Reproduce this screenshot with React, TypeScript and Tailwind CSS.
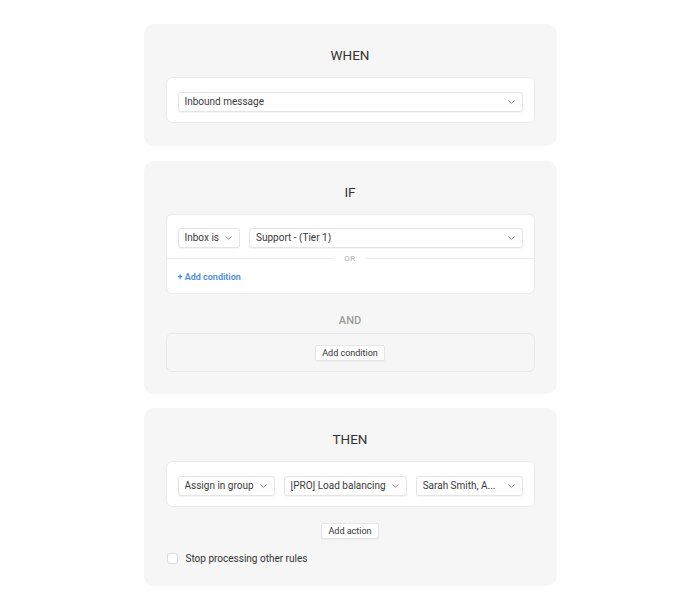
import React from "react"

function Chevron() {
  return (
    <svg width="7" height="4" viewBox="0 0 7 4" fill="none" className="shrink-0">
      <path d="M0.75 0.75l2.75 2.5 2.75-2.5" stroke="#8d8d8d" strokeWidth="1" strokeLinecap="round" strokeLinejoin="round" />
    </svg>
  )
}

function Select({ label, grow }: { label: string; grow?: boolean }) {
  return (
    <div
      className={`h-[20px] min-w-0 flex items-center justify-between gap-[6px] pl-[6px] pr-[7px] bg-white border border-[#e4e4e4] rounded-[3px] shadow-[0_1px_1px_rgba(0,0,0,0.04)] text-[10px] leading-none text-[#3a3a3a] ${
        grow ? "flex-1" : "shrink-0"
      }`}
    >
      <span className="whitespace-nowrap overflow-hidden">{label}</span>
      <Chevron />
    </div>
  )
}

function Button({ label }: { label: string }) {
  return (
    <button className="h-[16px] px-[6px] bg-white border border-[#e6e6e6] rounded-[2px] shadow-[0_1px_1px_rgba(0,0,0,0.04)] text-[9px] leading-none text-[#333]">
      {label}
    </button>
  )
}

function Panel({ title, className, children }: { title: string; className?: string; children: React.ReactNode }) {
  return (
    <div className={`bg-[#f6f6f6] rounded-[10px] px-[22px] pt-[23px] ${className ?? ""}`}>
      <h2 className="text-center text-[13.5px] leading-[16px] text-[#333] mb-[14px]">{title}</h2>
      {children}
    </div>
  )
}

export default function App() {
  return (
    <div className="min-h-screen bg-white pt-[24px]" style={{ fontFamily: "Roboto, 'Noto Sans', sans-serif" }}>
      <div className="w-[413px] mx-auto flex flex-col">
        {/* When */}
        <Panel title="WHEN" className="pb-[23px]">
          <div className="bg-white border border-[#ebebeb] rounded-[6px] px-[11px] pt-[14px] pb-[10px]">
            <Select label="Inbound message" grow />
          </div>
        </Panel>

        {/* If */}
        <Panel title="IF" className="pb-[22px] mt-[15px]">
          <div className="bg-white border border-[#ebebeb] rounded-[6px] mt-[1px]">
            <div className="flex gap-[9px] px-[11px] pt-[13px] pb-[10px]">
              <Select label="Inbox is" />
              <Select label="Support - (Tier 1)" grow />
            </div>
            <div className="flex items-center h-px">
              <div className="flex-1 h-px bg-[#ececec]" />
              <span className="px-[10px] text-[8px] leading-none tracking-[0.08em] text-[#aaa]">OR</span>
              <div className="flex-1 h-px bg-[#ececec]" />
            </div>
            <div className="px-[11px] pt-[11px] pb-[9px] text-[9px] leading-[14px] font-semibold text-[#4a8be0]">
              + Add condition
            </div>
          </div>
          <div className="text-center text-[11px] leading-[16px] font-medium text-[#9c9c9c] mt-[19px] mb-[4px]">AND</div>
          <div className="border border-[#e8e8e8] rounded-[6px] flex justify-center pt-[11px] pb-[10px]">
            <Button label="Add condition" />
          </div>
        </Panel>

        {/* Then */}
        <Panel title="THEN" className="pb-[22px] mt-[14px]">
          <div className="bg-white border border-[#ebebeb] rounded-[6px] px-[11px] pt-[14px] pb-[10px] mt-[1px] flex gap-[9px]">
            <Select label="Assign in group" />
            <Select label="[PRO] Load balancing" />
            <Select label="Sarah Smith, A..." grow />
          </div>
          <div className="flex justify-center mt-[16px]">
            <Button label="Add action" />
          </div>
          <label className="flex items-center gap-[8px] mt-[14px] pl-[1px]">
            <span className="w-[11px] h-[11px] bg-white border border-[#dcdcdc] rounded-[3px]" />
            <span className="text-[10px] leading-[11px] text-[#333]">Stop processing other rules</span>
          </label>
        </Panel>
      </div>
    </div>
  )
}
